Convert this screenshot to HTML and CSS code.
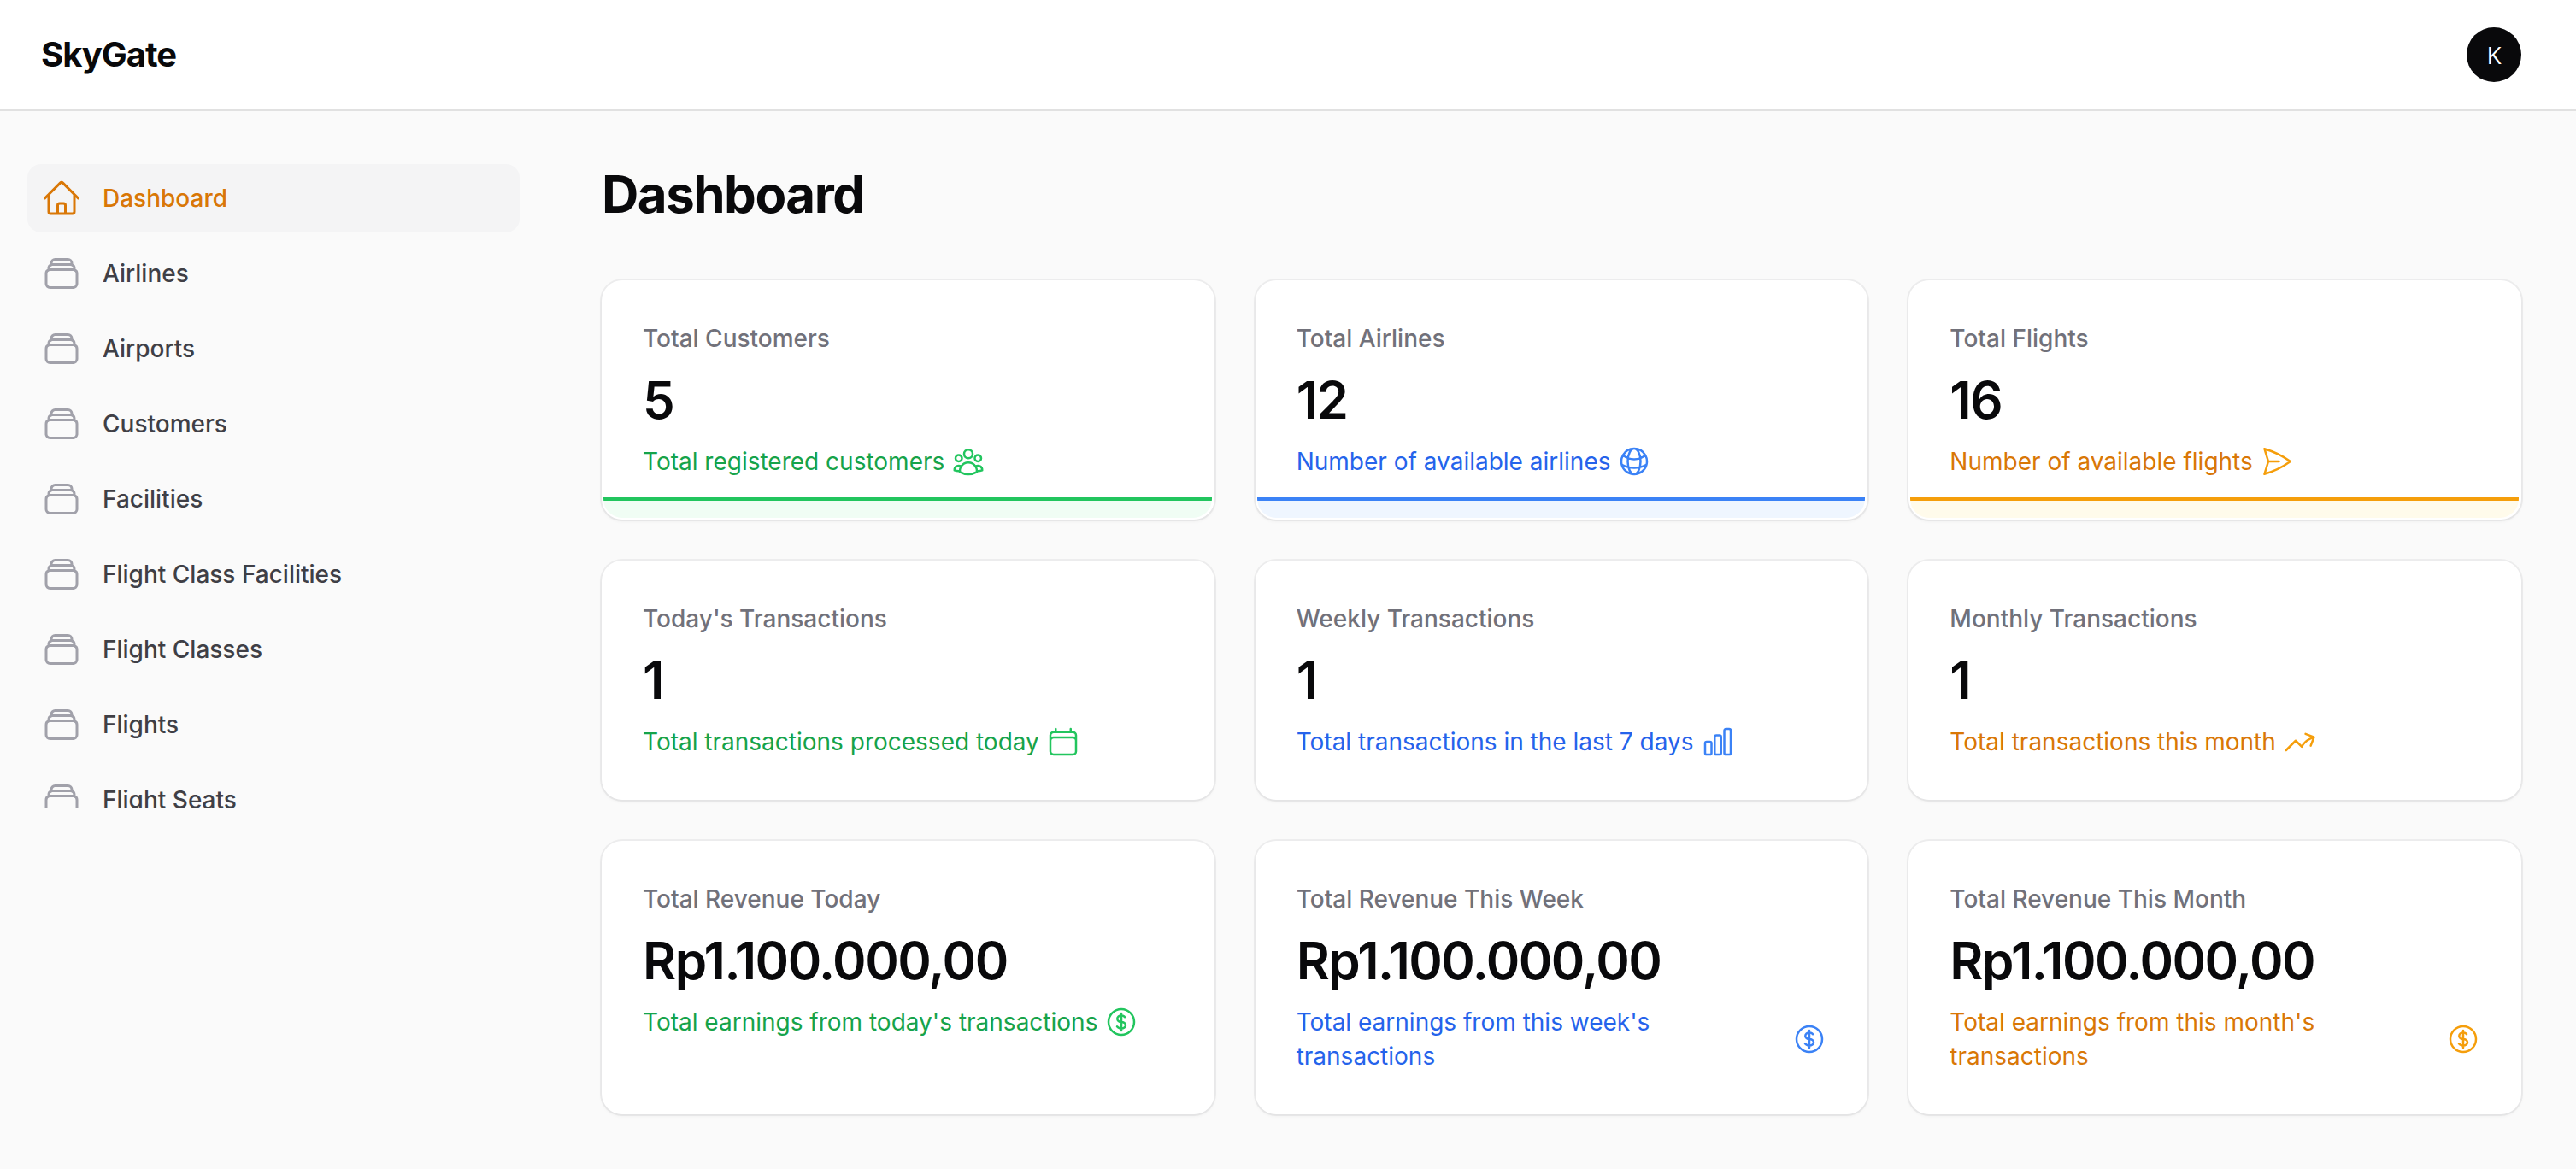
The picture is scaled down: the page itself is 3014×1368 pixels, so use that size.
FILE: index.html
```html
<!DOCTYPE html>
<html lang="en">
<head>
<meta charset="UTF-8">
<meta name="viewport" content="width=device-width, initial-scale=1.0">
<title>Dashboard - SkyGate</title>
<link rel="stylesheet" href="styles.css">
</head>
<body>

<svg class="icon-defs" xmlns="http://www.w3.org/2000/svg">
    <symbol id="i-home" viewBox="0 0 24 24"><path d="m2.25 12 8.954-8.955c.44-.439 1.152-.439 1.591 0L21.75 12M4.5 9.75v10.125c0 .621.504 1.125 1.125 1.125H9.75v-4.875c0-.621.504-1.125 1.125-1.125h2.25c.621 0 1.125.504 1.125 1.125V21h4.125c.621 0 1.125-.504 1.125-1.125V9.75M8.25 21h8.25"/></symbol>
    <symbol id="i-stack" viewBox="0 0 24 24"><path d="M6 6.878V6a2.25 2.25 0 0 1 2.25-2.25h7.5A2.25 2.25 0 0 1 18 6v.878m-12 0c.235-.083.487-.128.75-.128h10.5c.263 0 .515.045.75.128m-12 0A2.251 2.251 0 0 0 4.5 9v.878m13.5-3A2.25 2.25 0 0 1 19.5 9v.878m0 0a2.246 2.246 0 0 0-.75-.128H5.25c-.263 0-.515.045-.75.128m15 0A2.25 2.25 0 0 1 21 12v6a2.25 2.25 0 0 1-2.25 2.25H5.25A2.25 2.25 0 0 1 3 18v-6c0-.98.626-1.813 1.5-2.122"/></symbol>
    <symbol id="i-users" viewBox="0 0 24 24"><path d="M18 18.72a9.094 9.094 0 0 0 3.741-.479 3 3 0 0 0-4.682-2.72m.94 3.198.001.031c0 .225-.012.447-.037.666A11.944 11.944 0 0 1 12 21c-2.17 0-4.207-.576-5.963-1.584A6.062 6.062 0 0 1 6 18.719m12 0a5.971 5.971 0 0 0-.941-3.197m0 0A5.995 5.995 0 0 0 12 12.75a5.995 5.995 0 0 0-5.058 2.772m0 0a3 3 0 0 0-4.681 2.72 8.986 8.986 0 0 0 3.74.477m.94-3.197a5.971 5.971 0 0 0-.94 3.197M15 6.75a3 3 0 1 1-6 0 3 3 0 0 1 6 0Zm6 3a2.25 2.25 0 1 1-4.5 0 2.25 2.25 0 0 1 4.5 0Zm-13.5 0a2.25 2.25 0 1 1-4.5 0 2.25 2.25 0 0 1 4.5 0Z"/></symbol>
    <symbol id="i-globe" viewBox="0 0 24 24"><path d="M12 21a9.004 9.004 0 0 0 8.716-6.747M12 21a9.004 9.004 0 0 1-8.716-6.747M12 21c2.485 0 4.5-4.03 4.5-9S14.485 3 12 3m0 18c-2.485 0-4.5-4.03-4.5-9S9.515 3 12 3m0 0a8.997 8.997 0 0 1 7.843 4.582M12 3a8.997 8.997 0 0 0-7.843 4.582m15.686 0A11.953 11.953 0 0 1 12 10.5c-2.998 0-5.74-1.1-7.843-2.918m15.686 0A8.959 8.959 0 0 1 21 12c0 .778-.099 1.533-.284 2.253m0 0A17.919 17.919 0 0 1 12 16.5c-3.162 0-6.133-.815-8.716-2.247m0 0A9.015 9.015 0 0 1 3 12c0-1.605.42-3.113 1.157-4.418"/></symbol>
    <symbol id="i-plane" viewBox="0 0 24 24"><path d="M6 12 3.269 3.125A59.769 59.769 0 0 1 21.485 12 59.768 59.768 0 0 1 3.27 20.875L5.999 12Zm0 0h7.5"/></symbol>
    <symbol id="i-calendar" viewBox="0 0 24 24"><path d="M6.75 3v2.25M17.25 3v2.25M3 18.75V7.5a2.25 2.25 0 0 1 2.25-2.25h13.5A2.25 2.25 0 0 1 21 7.5v11.25m-18 0A2.25 2.25 0 0 0 5.25 21h13.5A2.25 2.25 0 0 0 21 18.75m-18 0v-7.5A2.25 2.25 0 0 1 5.25 9h13.5A2.25 2.25 0 0 1 21 11.25v7.5"/></symbol>
    <symbol id="i-bars" viewBox="0 0 24 24"><path d="M3 13.125C3 12.504 3.504 12 4.125 12h2.25c.621 0 1.125.504 1.125 1.125v6.75C7.5 20.496 6.996 21 6.375 21h-2.25A1.125 1.125 0 0 1 3 19.875v-6.75ZM9.75 8.625c0-.621.504-1.125 1.125-1.125h2.25c.621 0 1.125.504 1.125 1.125v11.25c0 .621-.504 1.125-1.125 1.125h-2.25a1.125 1.125 0 0 1-1.125-1.125V8.625ZM16.5 4.125c0-.621.504-1.125 1.125-1.125h2.25C20.496 3 21 3.504 21 4.125v15.75c0 .621-.504 1.125-1.125 1.125h-2.25a1.125 1.125 0 0 1-1.125-1.125V4.125Z"/></symbol>
    <symbol id="i-trend" viewBox="0 0 24 24"><path d="M2.25 18 9 11.25l4.306 4.306a11.95 11.95 0 0 1 5.814-5.518l2.74-1.22m0 0-5.94-2.281m5.94 2.28-2.28 5.941"/></symbol>
    <symbol id="i-dollar" viewBox="0 0 24 24"><path d="M12 6v12m-3-2.818.879.659c1.171.879 3.07.879 4.242 0 1.172-.879 1.172-2.303 0-3.182C13.536 12.219 12.768 12 12 12c-.725 0-1.45-.22-2.003-.659-1.106-.879-1.106-2.303 0-3.182s2.9-.879 4.006 0l.415.33M21 12a9 9 0 1 1-18 0 9 9 0 0 1 18 0Z"/></symbol>
</svg>

<header class="topbar">
    <div class="logo">SkyGate</div>
    <div class="avatar">K</div>
</header>

<div class="layout">
    <aside class="sidebar">
        <nav class="side-nav">
            <a class="nav-item active" href="#"><svg class="nav-icon"><use href="#i-home"/></svg><span>Dashboard</span></a>
            <a class="nav-item" href="#"><svg class="nav-icon"><use href="#i-stack"/></svg><span>Airlines</span></a>
            <a class="nav-item" href="#"><svg class="nav-icon"><use href="#i-stack"/></svg><span>Airports</span></a>
            <a class="nav-item" href="#"><svg class="nav-icon"><use href="#i-stack"/></svg><span>Customers</span></a>
            <a class="nav-item" href="#"><svg class="nav-icon"><use href="#i-stack"/></svg><span>Facilities</span></a>
            <a class="nav-item" href="#"><svg class="nav-icon"><use href="#i-stack"/></svg><span>Flight Class Facilities</span></a>
            <a class="nav-item" href="#"><svg class="nav-icon"><use href="#i-stack"/></svg><span>Flight Classes</span></a>
            <a class="nav-item" href="#"><svg class="nav-icon"><use href="#i-stack"/></svg><span>Flights</span></a>
            <a class="nav-item" href="#"><svg class="nav-icon"><use href="#i-stack"/></svg><span>Flight Seats</span></a>
        </nav>
    </aside>

    <main class="content">
        <h1 class="page-title">Dashboard</h1>

        <section class="stats">
            <div class="stat green">
                <div class="stat-label">Total Customers</div>
                <div class="stat-value">5</div>
                <div class="stat-desc"><span>Total registered customers</span><svg class="desc-icon"><use href="#i-users"/></svg></div>
                <div class="stat-chart"></div>
            </div>
            <div class="stat blue">
                <div class="stat-label">Total Airlines</div>
                <div class="stat-value">12</div>
                <div class="stat-desc"><span>Number of available airlines</span><svg class="desc-icon"><use href="#i-globe"/></svg></div>
                <div class="stat-chart"></div>
            </div>
            <div class="stat amber">
                <div class="stat-label">Total Flights</div>
                <div class="stat-value">16</div>
                <div class="stat-desc"><span>Number of available flights</span><svg class="desc-icon"><use href="#i-plane"/></svg></div>
                <div class="stat-chart"></div>
            </div>

            <div class="stat green">
                <div class="stat-label">Today's Transactions</div>
                <div class="stat-value">1</div>
                <div class="stat-desc"><span>Total transactions processed today</span><svg class="desc-icon"><use href="#i-calendar"/></svg></div>
            </div>
            <div class="stat blue">
                <div class="stat-label">Weekly Transactions</div>
                <div class="stat-value">1</div>
                <div class="stat-desc"><span>Total transactions in the last 7 days</span><svg class="desc-icon"><use href="#i-bars"/></svg></div>
            </div>
            <div class="stat amber">
                <div class="stat-label">Monthly Transactions</div>
                <div class="stat-value">1</div>
                <div class="stat-desc"><span>Total transactions this month</span><svg class="desc-icon"><use href="#i-trend"/></svg></div>
            </div>

            <div class="stat green">
                <div class="stat-label">Total Revenue Today</div>
                <div class="stat-value">Rp1.100.000,00</div>
                <div class="stat-desc"><span>Total earnings from today's transactions</span><svg class="desc-icon"><use href="#i-dollar"/></svg></div>
            </div>
            <div class="stat blue">
                <div class="stat-label">Total Revenue This Week</div>
                <div class="stat-value">Rp1.100.000,00</div>
                <div class="stat-desc"><span>Total earnings from this week's transactions</span><svg class="desc-icon"><use href="#i-dollar"/></svg></div>
            </div>
            <div class="stat amber">
                <div class="stat-label">Total Revenue This Month</div>
                <div class="stat-value">Rp1.100.000,00</div>
                <div class="stat-desc"><span>Total earnings from this month's transactions</span><svg class="desc-icon"><use href="#i-dollar"/></svg></div>
            </div>
        </section>
    </main>
</div>

</body>
</html>
```

FILE: styles.css
```css
* {
    box-sizing: border-box;
}

body {
    margin: 0;
    min-height: 1368px;
    background-color: #fafafa;
    color: #09090b;
    font-family: Inter, "Liberation Sans", sans-serif;
    font-size: 28px;
    line-height: 40px;
}

.icon-defs {
    display: none;
}

/* top bar */
.topbar {
    display: flex;
    justify-content: space-between;
    align-items: center;
    height: 128px;
    padding: 0 64px 0 48px;
    background-color: #fff;
    box-shadow: 0 2px 0 rgba(9, 9, 11, 0.1);
}

.logo {
    font-size: 40px;
    line-height: 50px;
    font-weight: 700;
    letter-spacing: -1px;
}

.avatar {
    display: flex;
    justify-content: center;
    align-items: center;
    width: 64px;
    height: 64px;
    border-radius: 50%;
    background-color: #09090b;
    color: #fff;
    font-family: "Open Sans", sans-serif;
    font-size: 28px;
}

/* sidebar */
.layout {
    display: grid;
    grid-template-columns: 640px 1fr;
}

.sidebar {
    padding: 64px 32px 0;
}

.side-nav {
    display: flex;
    flex-direction: column;
    gap: 8px;
    height: 754px;
    overflow: hidden;
}

.nav-item {
    display: flex;
    flex-shrink: 0;
    align-items: center;
    gap: 24px;
    height: 80px;
    padding: 0 16px;
    border-radius: 16px;
    color: #3f3f46;
    font-weight: 500;
    text-decoration: none;
}

.nav-icon {
    flex-shrink: 0;
    width: 48px;
    height: 48px;
    fill: none;
    stroke: #a1a1aa;
    stroke-width: 1.5;
    stroke-linecap: round;
    stroke-linejoin: round;
}

.nav-item.active {
    background-color: #f4f4f5;
    color: #d97706;
}

.nav-item.active .nav-icon {
    stroke: #d97706;
}

/* main */
.content {
    padding: 64px;
}

.page-title {
    margin: 0 0 66px;
    font-size: 60px;
    line-height: 70px;
    font-weight: 700;
    letter-spacing: -1.5px;
}

.stats {
    display: grid;
    grid-template-columns: repeat(3, 1fr);
    gap: 48px;
}

.stat {
    position: relative;
    display: flex;
    flex-direction: column;
    gap: 16px;
    padding: 48px;
    border-radius: 24px;
    background-color: #fff;
    box-shadow: 0 0 0 2px rgba(9, 9, 11, 0.05), 0 2px 4px rgba(0, 0, 0, 0.05);
}

.stat-label {
    color: #71717a;
    font-weight: 500;
}

.stat-value {
    font-size: 60px;
    line-height: 72px;
    font-weight: 600;
    letter-spacing: -1.5px;
}

.stat-desc {
    display: flex;
    align-items: center;
    gap: 8px;
}

.desc-icon {
    flex-shrink: 0;
    width: 40px;
    height: 40px;
    fill: none;
    stroke-width: 1.5;
    stroke-linecap: round;
    stroke-linejoin: round;
}

/* flat sparkline along the bottom edge of the first row */
.stat-chart {
    position: absolute;
    left: 2px;
    right: 3px;
    bottom: 2px;
    height: 24px;
    border-top: 4px solid;
    border-radius: 0 0 22px 22px;
}

.green .stat-desc { color: #16a34a; }
.green .desc-icon { stroke: #22c55e; }
.green .stat-chart { border-top-color: #22c55e; background-color: #f0fdf4; }

.blue .stat-desc { color: #2563eb; }
.blue .desc-icon { stroke: #3b82f6; }
.blue .stat-chart { border-top-color: #3b82f6; background-color: #eff6ff; }

.amber .stat-desc { color: #d97706; }
.amber .desc-icon { stroke: #f59e0b; }
.amber .stat-chart { border-top-color: #f59e0b; background-color: #fffbeb; }
```
